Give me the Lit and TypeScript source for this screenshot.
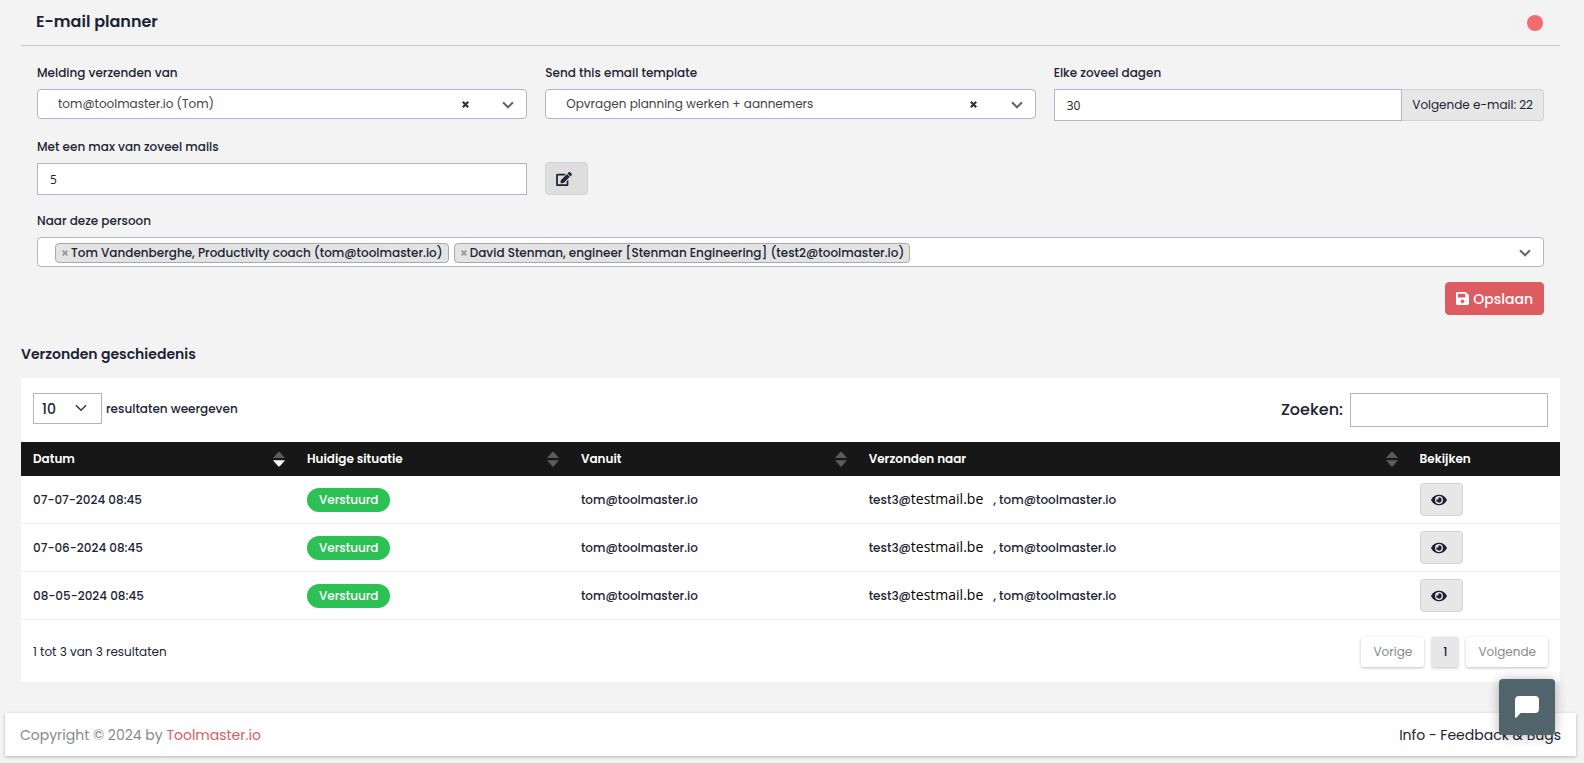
import { LitElement, html, css, svg } from "lit";
import { customElement, property, state } from "lit/decorators.js";
import { classMap } from "lit/directives/class-map.js";

const editIcon = html`<svg class="icon" width="16" height="14" viewBox="0 0 576 512" aria-hidden="true"><path fill="currentColor" d="M402.6 83.2l90.2 90.2c3.8 3.8 3.8 10 0 13.8L274.4 405.6l-92.8 10.3c-12.4 1.4-22.9-9.1-21.5-21.5l10.3-92.8L388.8 83.2c3.8-3.8 10-3.8 13.8 0zm162-22.9l-48.8-48.8c-15.2-15.2-39.9-15.2-55.2 0l-35.4 35.4c-3.8 3.8-3.8 10 0 13.8l90.2 90.2c3.8 3.8 10 3.8 13.8 0l35.4-35.4c15.2-15.3 15.2-40 0-55.2zM384 346.2V448H64V128h229.8c3.2 0 6.2-1.3 8.5-3.5l40-40c7.6-7.6 2.2-20.5-8.5-20.5H48C21.5 64 0 85.5 0 112v352c0 26.5 21.5 48 48 48h352c26.5 0 48-21.5 48-48V306.2c0-10.7-12.9-16-20.5-8.5l-40 40c-2.2 2.3-3.5 5.3-3.5 8.5z"/></svg>`;
const eyeIcon = html`<svg class="icon" width="16" height="14" viewBox="0 0 576 512" aria-hidden="true"><path fill="currentColor" d="M572.52 241.4C518.29 135.59 410.93 64 288 64S57.68 135.64 3.48 241.41a32.35 32.35 0 0 0 0 29.19C57.71 376.41 165.07 448 288 448s230.32-71.64 284.52-177.41a32.35 32.35 0 0 0 0-29.19zM288 400a144 144 0 1 1 144-144 143.93 143.93 0 0 1-144 144zm0-240a95.31 95.31 0 0 0-25.31 3.79 47.85 47.85 0 0 1-66.9 66.9A95.78 95.78 0 1 0 288 160z"/></svg>`;
const saveIcon = html`<svg class="icon" width="13" height="15" viewBox="0 0 448 512" aria-hidden="true"><path fill="currentColor" d="M433.941 129.941l-83.882-83.882A48 48 0 0 0 316.118 32H48C21.49 32 0 53.49 0 80v352c0 26.51 21.49 48 48 48h352c26.51 0 48-21.49 48-48V163.882a48 48 0 0 0-14.059-33.941zM224 416c-35.346 0-64-28.654-64-64 0-35.346 28.654-64 64-64s64 28.654 64 64c0 35.346-28.654 64-64 64zm96-304.52V212c0 6.627-5.373 12-12 12H76c-6.627 0-12-5.373-12-12V108c0-6.627 5.373-12 12-12h228.52c3.183 0 6.235 1.264 8.485 3.515l3.48 3.48A11.996 11.996 0 0 1 320 111.48z"/></svg>`;
const chevron = html`<svg class="chevron" width="12" height="8" viewBox="0 0 12 8" aria-hidden="true"><path fill="none" stroke="currentColor" d="M1 1.3 6 6.3 11 1.3"/></svg>`;
const cross = html`<svg width="7" height="7" viewBox="0 0 7 7" aria-hidden="true"><path stroke="currentColor" stroke-width="2.2" d="M.8.8 6.2 6.2M6.2.8.8 6.2"/></svg>`;
const sortMark = (sorted: boolean) => html`<svg width="12" height="16" viewBox="0 0 12 16" aria-hidden="true">
  ${svg`<path fill="#5b5b5b" d="M0 7 5 1.2q1-1 2 0L12 7z"/><path fill=${sorted ? "#fff" : "#5b5b5b"} d="M0 9.2h12L7 15q-1 1-2 0z"/>`}
</svg>`;

const sheet = css`
  * { box-sizing: border-box; }
  button, input, select { font: inherit; color: inherit; margin: 0; }
  button { cursor: pointer; }
  svg { display: block; flex: none; }
  .chevron { stroke-width: 2; }
  .btn {
    display: inline-flex;
    align-items: center;
    gap: 4px;
    height: 33px;
    padding: 0 10px;
    border: 1px solid #d2d3d5;
    border-radius: 4px;
    background: #e7e7e7;
    vertical-align: top;
  }
  .btn.square { width: 43px; }
`;

@customElement("mail-planner")
export class MailPlanner extends LitElement {
  @state() private active = true;

  private people = [
    "Tom Vandenberghe, Productivity coach (tom@toolmaster.io)",
    "David Stenman, engineer [Stenman Engineering] (test2@toolmaster.io)",
  ];

  static styles = [sheet, css`
    :host { display: block; }
    .head {
      display: flex;
      align-items: center;
      justify-content: space-between;
      height: 46px;
      padding: 0 17px 0 15px;
      border-bottom: 1px solid #c6c7c9;
    }
    h1 { margin: 0; padding-bottom: 2px; font-size: 16px; line-height: 24px; font-weight: 600; }
    .switch {
      appearance: none;
      display: flex;
      justify-content: flex-start;
      align-items: center;
      width: 34px;
      height: 16px;
      border-radius: 8px;
      background: #f2f2f2;
    }
    .switch::before {
      content: "";
      width: 16px;
      height: 16px;
      border-radius: 50%;
      background: #aaa;
    }
    .switch:checked { justify-content: flex-end; }
    .switch:checked::before { background: #f26b70; }
    form {
      display: grid;
      grid-template-columns: repeat(3, minmax(0, 1fr));
      gap: 16px 18px;
      padding: 17px 16px 0;
    }
    .field { display: flex; flex-direction: column; gap: 6px; }
    .wide { grid-column: 1 / -1; }
    .label { line-height: 20px; font-weight: 500; }
    .box {
      position: relative;
      height: 30px;
      border: 1px solid #b1b6c6;
      border-radius: 4px;
      background: #fff;
    }
    .box select {
      appearance: none;
      display: block;
      width: 100%;
      height: 28px;
      padding: 0 80px 0 20px;
      border: 0;
      border-radius: 4px;
      background: none;
      color: #444;
    }
    .clear {
      position: absolute;
      top: 6px;
      right: 53px;
      display: grid;
      place-items: center;
      width: 16px;
      height: 16px;
      padding: 0;
      border: 0;
      background: none;
      color: #333;
    }
    .box .chevron {
      position: absolute;
      top: 11px;
      right: 12px;
      color: #666;
      pointer-events: none;
    }
    .text {
      min-width: 0;
      height: 32px;
      padding: 0 12px;
      border: 1px solid #b1b6c6;
      border-radius: 0;
      background: #fff;
      font-family: "Open Sans", "Noto Sans", sans-serif;
      color: #222;
    }
    .group { display: flex; }
    .group .text { flex: 1; }
    .addon {
      display: flex;
      align-items: center;
      padding: 0 10px;
      border: 1px solid #cfd3da;
      border-left: 0;
      border-radius: 0 4px 4px 0;
      background: #e7e7e7;
      white-space: nowrap;
    }
    .edit { align-self: end; background: #dedede; }
    .tags {
      display: flex;
      align-items: center;
      gap: 5px;
      height: 28px;
      margin: 0;
      padding: 2px 40px 0 17px;
      list-style: none;
    }
    .tags li {
      display: flex;
      align-items: center;
      height: 20px;
      padding: 0 5px;
      border: 1px solid #a9a9a9;
      border-radius: 4px;
      background: #e3e3e3;
      font-weight: 500;
      white-space: nowrap;
    }
    .remove {
      padding: 0 3px 0 1px;
      border: 0;
      background: none;
      color: #999;
    }
    .remove svg { width: 6px; height: 6px; }
    .actions { display: flex; justify-content: flex-end; padding: 15px 16px 0; }
    .save {
      border-color: #dd5c61;
      background: #dd5c61;
      color: #fff;
      font-size: 14px;
      font-weight: 500;
    }
  `];

  render() {
    return html`
      <header class="head">
        <h1>E-mail planner</h1>
        <input class="switch" type="checkbox" role="switch" aria-label="Actief" .checked=${this.active}
          @change=${(e: Event) => (this.active = (e.target as HTMLInputElement).checked)} />
      </header>
      <form id="planner" @submit=${(e: Event) => e.preventDefault()}>
        <div class="field">
          <label class="label" for="from">Melding verzenden van</label>
          <div class="box">
            <select id="from"><option>tom@toolmaster.io (Tom)</option></select>
            <button class="clear" type="button" aria-label="Wissen">${cross}</button>
            ${chevron}
          </div>
        </div>
        <div class="field">
          <label class="label" for="template">Send this email template</label>
          <div class="box">
            <select id="template"><option>Opvragen planning werken + aannemers</option></select>
            <button class="clear" type="button" aria-label="Wissen">${cross}</button>
            ${chevron}
          </div>
        </div>
        <div class="field">
          <label class="label" for="days">Elke zoveel dagen</label>
          <div class="group">
            <input class="text" id="days" type="text" inputmode="numeric" value="30" />
            <span class="addon">Volgende e-mail: 22</span>
          </div>
        </div>
        <div class="field">
          <label class="label" for="max">Met een max van zoveel mails</label>
          <input class="text" id="max" type="text" inputmode="numeric" value="5" />
        </div>
        <button class="btn square edit" type="button" aria-label="Bewerken">${editIcon}</button>
        <div class="field wide">
          <span class="label" id="to">Naar deze persoon</span>
          <div class="box" role="group" aria-labelledby="to">
            <ul class="tags">
              ${this.people.map((p) => html`<li><button class="remove" type="button" aria-label="Verwijderen">${cross}</button>${p}</li>`)}
            </ul>
            ${chevron}
          </div>
        </div>
      </form>
      <div class="actions">
        <button class="btn save" type="submit" form="planner">${saveIcon}Opslaan</button>
      </div>
    `;
  }
}

interface Mail { date: string; from: string; user: string; domain: string; cc: string; }

@customElement("mail-history")
export class MailHistory extends LitElement {
  @property({ attribute: false }) mails: Mail[] = [];

  private columns = ["Datum", "Huidige situatie", "Vanuit", "Verzonden naar", "Bekijken"];

  static styles = [sheet, css`
    :host { display: block; }
    h2 { margin: 27px 0 12px; font-size: 14px; line-height: 24px; font-weight: 600; }
    .card { background: #fff; }
    .toolbar {
      display: flex;
      justify-content: space-between;
      align-items: flex-start;
      padding: 15px 12px;
    }
    .length { display: flex; align-items: center; gap: 4px; font-weight: 500; }
    .pick { position: relative; }
    .pick select {
      appearance: none;
      display: block;
      width: 69px;
      height: 31px;
      padding: 0 8px;
      border: 1px solid #b1b6c6;
      border-radius: 0;
      background: #fff;
      font-size: 14px;
    }
    .pick .chevron {
      position: absolute;
      top: 11px;
      right: 15px;
      color: #343a40;
      stroke-width: 1.5;
      pointer-events: none;
    }
    .search { display: flex; align-items: center; gap: 7px; font-size: 16px; font-weight: 500; }
    .search input {
      width: 198px;
      height: 34px;
      padding: 0 8px;
      border: 1px solid #b1b6c6;
      border-radius: 0;
      background: #fff;
    }
    table { width: 100%; border-collapse: separate; border-spacing: 0; table-layout: fixed; }
    .c0 { width: 17.8%; }
    .c1 { width: 17.8%; }
    .c2 { width: 18.7%; }
    .c3 { width: 35.8%; }
    th {
      height: 34px;
      padding: 0 10px 0 12px;
      background: #171717;
      color: #fff;
      font-weight: 600;
      text-align: left;
    }
    .th { display: flex; align-items: center; justify-content: space-between; }
    td {
      height: 48px;
      padding: 0 12px;
      border-bottom: 1px solid #f0f0f1;
      font-weight: 500;
    }
    .badge {
      display: inline-block;
      padding: 0 12px;
      border-radius: 12px;
      background: #2dc155;
      color: #fff;
      line-height: 24px;
    }
    .domain {
      margin-right: 10px;
      font-family: "Open Sans", "Noto Sans", sans-serif;
      font-size: 14px;
      font-weight: 400;
      color: #000;
    }
    .foot {
      display: flex;
      justify-content: space-between;
      align-items: center;
      padding: 17px 12px 15px;
    }
    .pages { display: flex; gap: 8px; }
    .pages button {
      height: 30px;
      padding: 0 12px;
      border: 0;
      border-radius: 3px;
      background: #fff;
      color: #868a8f;
      box-shadow: 0 1px 3px rgba(0, 0, 0, 0.25);
    }
    .pages .current { padding: 0 11px; border-radius: 0; background: #e7e7e7; color: #1b2434; font-weight: 500; }
  `];

  render() {
    return html`
      <h2>Verzonden geschiedenis</h2>
      <section class="card">
        <div class="toolbar">
          <label class="length">
            <span class="pick"><select><option>10</option><option>25</option><option>50</option></select>${chevron}</span>
            resultaten weergeven
          </label>
          <label class="search">Zoeken: <input type="search" /></label>
        </div>
        <table>
          <colgroup><col class="c0" /><col class="c1" /><col class="c2" /><col class="c3" /><col /></colgroup>
          <thead>
            <tr>
              ${this.columns.map((c, i) => html`<th scope="col"><div class="th">${c}${i < 4 ? sortMark(i === 0) : ""}</div></th>`)}
            </tr>
          </thead>
          <tbody>
            ${this.mails.map((m) => html`
              <tr>
                <td>${m.date}</td>
                <td><span class="badge">Verstuurd</span></td>
                <td>${m.from}</td>
                <td>${m.user}<span class="domain">${m.domain}</span>, ${m.cc}</td>
                <td><button class="btn square" type="button" aria-label="Bekijken">${eyeIcon}</button></td>
              </tr>`)}
          </tbody>
        </table>
        <div class="foot">
          <span>1 tot 3 van 3 resultaten</span>
          <nav class="pages" aria-label="Pagina's">
            ${["Vorige", "1", "Volgende"].map((p) => html`<button type="button" class=${classMap({ current: p === "1" })}>${p}</button>`)}
          </nav>
        </div>
      </section>
    `;
  }
}

@customElement("app-root")
export class AppRoot extends LitElement {
  private mails: Mail[] = ["07-07-2024 08:45", "07-06-2024 08:45", "08-05-2024 08:45"].map((date) => ({
    date,
    from: "tom@toolmaster.io",
    user: "test3@",
    domain: "testmail.be",
    cc: "tom@toolmaster.io",
  }));

  static styles = [sheet, css`
    :host {
      display: block;
      min-height: 100vh;
      background: #f3f3f3;
      color: #1b2434;
      font-family: Poppins, Inter, "Open Sans", sans-serif;
      font-size: 12px;
      line-height: 20px;
    }
    main { padding: 0 24px 31px 21px; }
    footer {
      display: flex;
      justify-content: space-between;
      align-items: center;
      height: 43px;
      margin: 0 8px 0 5px;
      padding: 0 15px;
      background: #fff;
      box-shadow: 0 1px 3px rgba(0, 0, 0, 0.25);
      font-size: 14px;
      color: #868a8f;
    }
    a { color: #1b2434; text-decoration: none; }
    .brand { color: #dd5c61; }
    .links { color: #1b2434; }
    .chat {
      position: fixed;
      right: 29px;
      bottom: 28px;
      display: grid;
      place-items: center;
      width: 56px;
      height: 56px;
      padding: 0;
      border: 0;
      border-radius: 4px;
      background: #52646b;
      color: #fff;
      box-shadow: 0 1px 12px rgba(0, 0, 0, 0.3);
    }
  `];

  render() {
    return html`
      <main>
        <mail-planner></mail-planner>
        <mail-history .mails=${this.mails}></mail-history>
      </main>
      <footer>
        <span>Copyright © 2024 by <a class="brand" href="#">Toolmaster.io</a></span>
        <span class="links"><a href="#">Info</a> - <a href="#">Feedback &amp; Bugs</a></span>
      </footer>
      <button class="chat" type="button" aria-label="Chat">
        <svg width="24" height="22" viewBox="0 0 24 22" aria-hidden="true"><path fill="currentColor" d="M4 0h16q4 0 4 4v9q0 4-4 4H5.500L1.500 21.500Q0 22.500 0 20.500V4Q0 0 4 0z"/></svg>
      </button>
    `;
  }
}
